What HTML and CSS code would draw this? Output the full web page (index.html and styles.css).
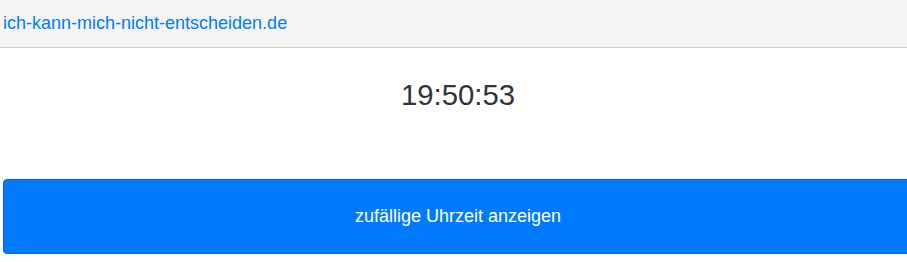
FILE: index.html
```html
<!DOCTYPE html>
<html lang="de">
<head>
<meta charset="utf-8">
<title>ich-kann-mich-nicht-entscheiden.de</title>
<link rel="stylesheet" href="styles.css">
</head>
<body>
<header class="topbar">
  <a class="brand" href="#">ich-kann-mich-nicht-entscheiden.de</a>
</header>
<main class="content">
  <div class="time">19:50:53</div>
  <button class="btn" type="button">zufällige Uhrzeit anzeigen</button>
</main>
</body>
</html>
```
FILE: styles.css
```css
html, body {
  margin: 0;
  padding: 0;
  background: #ffffff;
  font-family: "Liberation Sans", Arial, sans-serif;
  overflow: hidden;
}
.topbar {
  height: 47px;
  background: #f5f5f5;
  border-bottom: 1px solid #cfcfcf;
  display: flex;
  align-items: center;
  padding-left: 3px;
}
.brand {
  color: #007bff;
  text-decoration: none;
  font-size: 18px;
}
.content {
  width: 910px;
  padding-left: 3px;
  display: flex;
  flex-direction: column;
}
.time {
  text-align: center;
  font-size: 29.3px;
  color: #333333;
  margin-top: 30px;
  height: 34px;
  line-height: 34px;
}
.btn {
  margin-top: 67px;
  height: 75px;
  width: 100%;
  background: #007bff;
  border: 1px solid #0069d9;
  border-radius: 4px;
  color: #ffffff;
  font-family: "Liberation Sans", Arial, sans-serif;
  font-size: 18px;
}
```
